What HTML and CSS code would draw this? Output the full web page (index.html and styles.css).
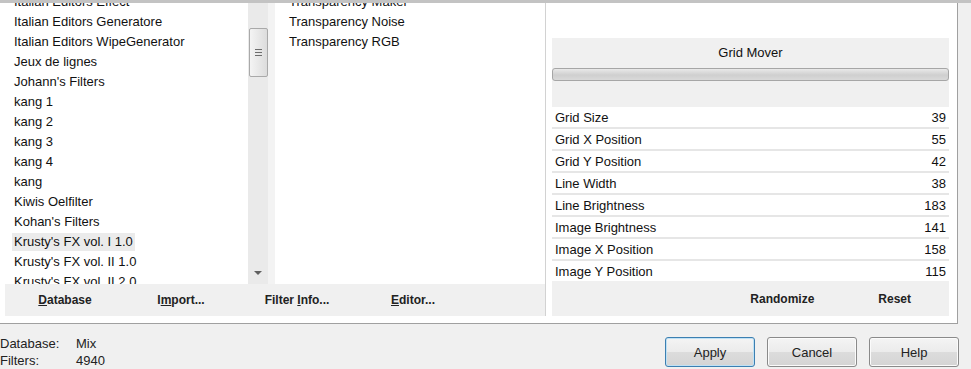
FILE: index.html
```html
<!DOCTYPE html>
<html>
<head>
<meta charset="utf-8">
<link rel="stylesheet" href="styles.css">
</head>
<body>
<div class="topstrip"></div>
<div class="main">
  <div class="leftcol">
    <div class="lists">
      <div class="list list1">
        <ul class="items">
          <li><span>Italian Editors Effect</span></li>
          <li><span>Italian Editors Generatore</span></li>
          <li><span>Italian Editors WipeGenerator</span></li>
          <li><span>Jeux de lignes</span></li>
          <li><span>Johann's Filters</span></li>
          <li><span>kang 1</span></li>
          <li><span>kang 2</span></li>
          <li><span>kang 3</span></li>
          <li><span>kang 4</span></li>
          <li><span>kang</span></li>
          <li><span>Kiwis Oelfilter</span></li>
          <li><span>Kohan's Filters</span></li>
          <li class="sel"><span>Krusty's FX vol. I 1.0</span></li>
          <li><span>Krusty's FX vol. II 1.0</span></li>
          <li><span>Krusty's FX vol. II 2.0</span></li>
        </ul>
      </div>
      <div class="scrollbar">
        <div class="thumb"><i></i><i></i><i></i></div>
        <div class="arrow"></div>
      </div>
      <div class="gutter"></div>
      <div class="list list2">
        <ul class="items">
          <li><span>Transparency Maker</span></li>
          <li><span>Transparency Noise</span></li>
          <li><span>Transparency RGB</span></li>
        </ul>
      </div>
    </div>
    <div class="bar">
      <span class="btn"><u>D</u>atabase</span>
      <span class="btn">I<u>m</u>port...</span>
      <span class="btn">Filter <u>I</u>nfo...</span>
      <span class="btn"><u>E</u>ditor...</span>
    </div>
  </div>
  <div class="vsep"></div>
  <div class="rightcol">
    <div class="panel">
      <div class="ptitle">Grid Mover</div>
      <div class="slider"></div>
      <div class="pspace"></div>
      <div class="params">
        <div class="row"><span>Grid Size</span><span>39</span></div>
        <div class="row"><span>Grid X Position</span><span>55</span></div>
        <div class="row"><span>Grid Y Position</span><span>42</span></div>
        <div class="row"><span>Line Width</span><span>38</span></div>
        <div class="row"><span>Line Brightness</span><span>183</span></div>
        <div class="row"><span>Image Brightness</span><span>141</span></div>
        <div class="row"><span>Image X Position</span><span>158</span></div>
        <div class="row"><span>Image Y Position</span><span>115</span></div>
      </div>
      <div class="pbar">
        <span class="btn">Randomize</span>
        <span class="btn">Reset</span>
      </div>
    </div>
  </div>
</div>
<div class="footer">
  <div class="info">
    <div class="inforow"><span class="k">Database:</span><span>Mix</span></div>
    <div class="inforow"><span class="k">Filters:</span><span>4940</span></div>
  </div>
  <div class="buttons">
    <button class="dlg default">Apply</button>
    <button class="dlg">Cancel</button>
    <button class="dlg">Help</button>
  </div>
</div>
</body>
</html>
```
FILE: styles.css
```css
* { box-sizing: border-box; }
html, body { margin: 0; padding: 0; }
body {
  width: 971px;
  height: 369px;
  overflow: hidden;
  background: #f0f0f0;
  font-family: "Liberation Sans", Arial, sans-serif;
  font-size: 13px;
  color: #111;
}
.topstrip {
  height: 3px;
  background: #c3c3c3;
}
.main {
  display: flex;
  width: 958px;
  height: 321px;
  background: #fff;
  border-right: 1px solid #a0a0a0;
  border-bottom: 1px solid #a0a0a0;
}
.leftcol {
  width: 545px;
  padding-left: 5px;
  display: flex;
  flex-direction: column;
}
.lists {
  display: flex;
  height: 281px;
}
.list {
  overflow: hidden;
  height: 281px;
}
.list1 { width: 243px; }
.list2 { width: 270px; }
.items {
  list-style: none;
  margin: -11px 0 0 0;
  padding: 0;
}
.items li {
  height: 20px;
  display: flex;
  align-items: center;
  padding-left: 7px;
  white-space: nowrap;
}
.list2 .items li { padding-left: 12px; }
.items li span {
  line-height: 18px;
  padding: 0 2px;
}
.items li.sel span { background: #ebebeb; }
.scrollbar {
  width: 20px;
  background: #eaeaea;
  display: flex;
  flex-direction: column;
  align-items: center;
  padding-bottom: 9px;
}
.thumb {
  margin-top: 25px;
  width: 19px;
  height: 49px;
  margin-left: 1px;
  border: 1px solid #a9a9a9;
  border-radius: 2px;
  background: linear-gradient(to right, #f4f4f4, #dcdcdc);
  display: flex;
  flex-direction: column;
  align-items: center;
  justify-content: center;
  gap: 2px;
}
.thumb i {
  display: block;
  width: 7px;
  height: 1px;
  background: #6d6d6d;
}
.arrow {
  margin-top: auto;
  width: 0;
  height: 0;
  border-left: 4px solid transparent;
  border-right: 4px solid transparent;
  border-top: 4px solid #606060;
}
.gutter {
  width: 7px;
  background: #f3f3f3;
}
.bar {
  height: 32px;
  background: #f0f0f0;
  display: flex;
  align-items: center;
  padding-left: 2px;
}
.btn {
  font-weight: bold;
  font-size: 12px;
  color: #222;
}
.bar .btn {
  width: 116px;
  text-align: center;
}
.vsep {
  width: 1px;
  height: 313px;
  background: #d2d2d2;
}
.rightcol {
  padding-left: 6px;
  width: 411px;
}
.panel {
  margin-top: 35px;
  width: 397px;
  background: #f0f0f0;
  display: flex;
  flex-direction: column;
}
.ptitle {
  height: 28px;
  padding-top: 1px;
  line-height: 27px;
  text-align: center;
}
.slider {
  margin: 2px 0 0 0;
  height: 13px;
  border: 1px solid #a6a6a6;
  border-radius: 3px;
  background: linear-gradient(#e9e9e9, #cfcfcf 55%, #d9d9d9);
}
.pspace { height: 26px; }
.params {
  display: flex;
  flex-direction: column;
}
.row {
  height: 22px;
  padding: 1px 3px 1px 3px;
  display: flex;
  align-items: center;
  justify-content: space-between;
  background: #fff;
  border-bottom: 2px solid #e6e6e6;
}
.row:last-child {
  height: 20px;
  border-bottom: 0;
}
.pbar {
  height: 35px;
  padding-top: 1px;
  display: flex;
  align-items: center;
  justify-content: flex-end;
  padding-right: 38px;
  gap: 64px;
}
.footer {
  display: flex;
  justify-content: space-between;
}
.info {
  padding-top: 11px;
}
.inforow {
  display: flex;
  line-height: 17px;
  color: #222;
}
.inforow .k { width: 76px; }
.buttons {
  display: flex;
  gap: 12px;
  padding-top: 13px;
  padding-right: 12px;
}
.dlg {
  width: 90px;
  height: 30px;
  font-family: "Liberation Sans", Arial, sans-serif;
  font-size: 13px;
  color: #222;
  border: 1px solid #8a8a8a;
  border-radius: 3px;
  background: linear-gradient(#f4f4f4, #ebebeb 50%, #dcdcdc 51%, #d4d4d4);
  box-shadow: inset 0 0 0 1px #fbfbfb;
  padding: 0;
}
.dlg.default {
  border-color: #3c7fb1;
  box-shadow: inset 0 0 0 1px #bfe1f5;
}
```
